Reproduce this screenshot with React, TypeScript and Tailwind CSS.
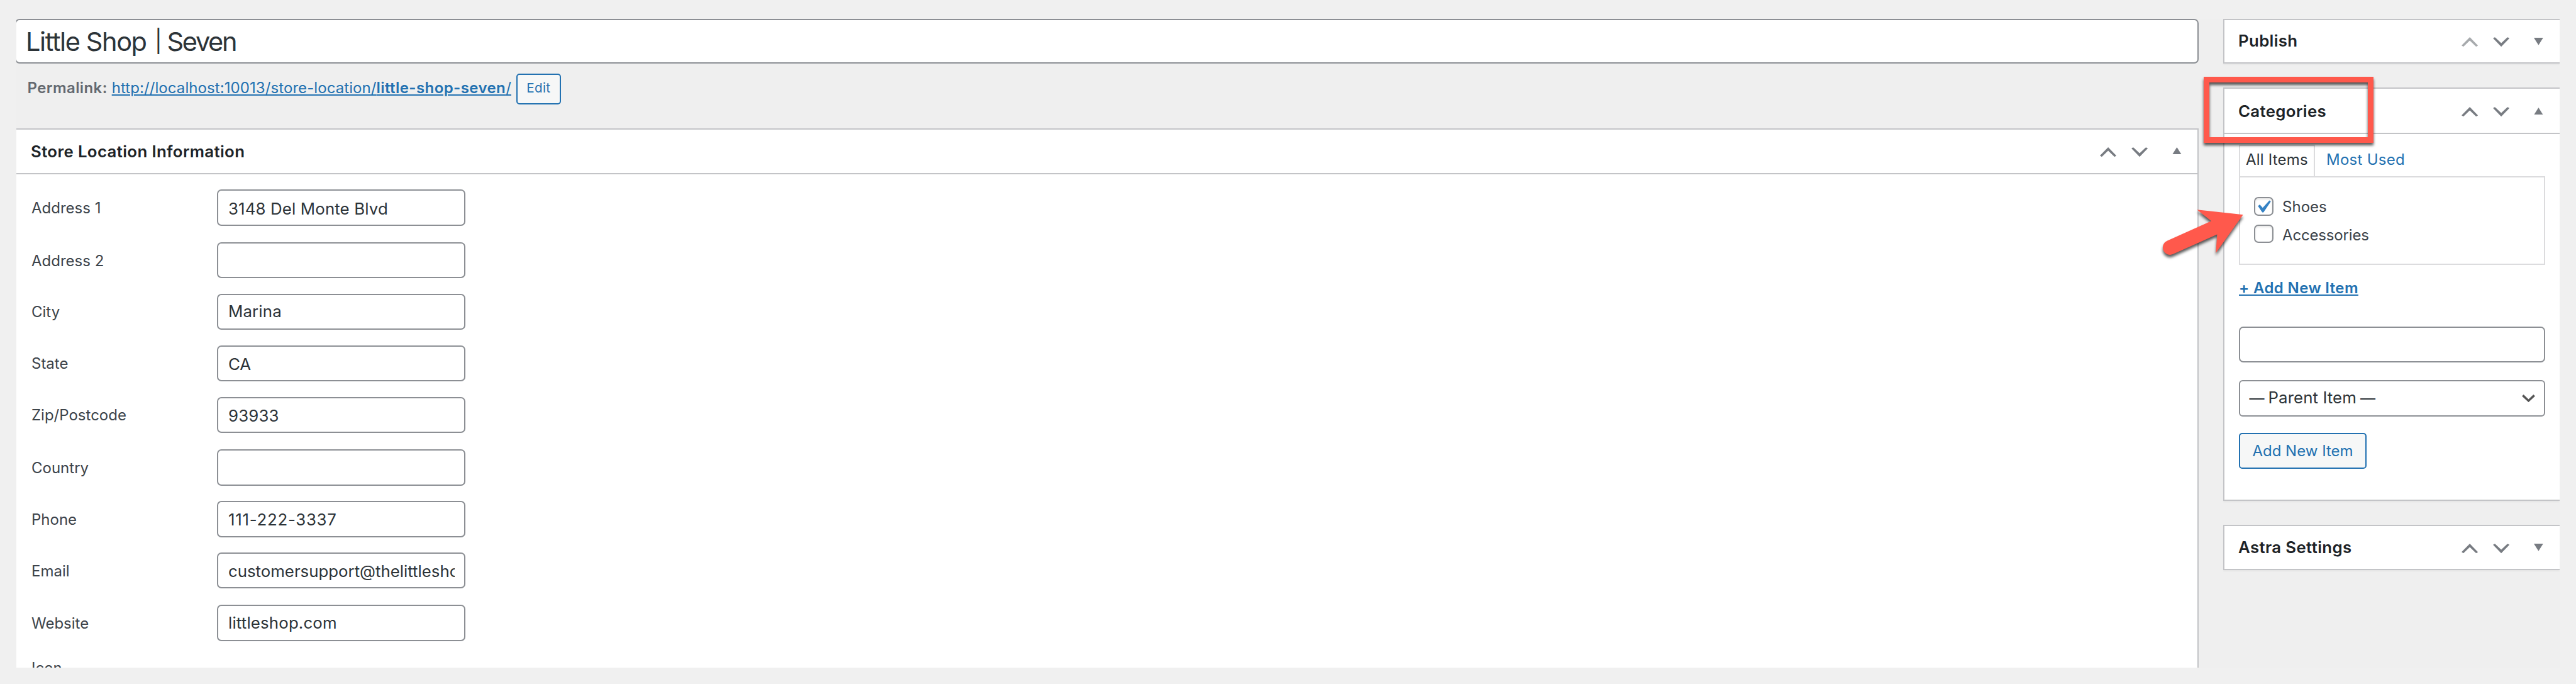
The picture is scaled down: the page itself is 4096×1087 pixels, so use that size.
import type { ReactNode } from "react";

function Chevron({ down = false, muted = false }: { down?: boolean; muted?: boolean }) {
  return (
    <svg
      viewBox="0 0 30 17.4"
      className={`h-[15.2px] w-[26.2px] ${down ? "rotate-180" : ""} ${muted ? "text-[#a7aaad]" : "text-[#787c82]"}`}
    >
      <path d="M15 0L30 15.3L26.6 17.4L15 6.4L3.4 17.4L0 15.3Z" fill="currentColor" />
    </svg>
  );
}

function Triangle({ down = false, className = "" }: { down?: boolean; className?: string }) {
  return (
    <svg viewBox="0 0 17 13.4" className={`h-[11.7px] w-[14.8px] text-[#787c82] ${down ? "rotate-180" : ""} ${className}`}>
      <path d="M8.5 0L17 13.4H0Z" fill="currentColor" />
    </svg>
  );
}

function PanelHeader({
  title,
  open = false,
  first = false,
  raised = false,
  className,
}: {
  title: string;
  open?: boolean;
  first?: boolean;
  raised?: boolean;
  className: string;
}) {
  return (
    <div
      className={`flex items-center justify-between ${open ? "h-[71.4px] border-b-2 border-[#c3c4c7] pt-[1px]" : "h-[67.6px]"} ${className}`}
    >
      <h2 className="text-[25.8px] leading-[34px] font-semibold tracking-[0.36px] text-[#1d2327]">{title}</h2>
      <div className="flex items-center pt-[2px]">
        <Chevron muted={first} />
        <span className="w-[23.5px]" />
        <Chevron down />
        <span className="w-[39.5px]" />
        <Triangle down={!open} className={raised ? "mb-[5px]" : "mb-[2px]"} />
      </div>
    </div>
  );
}

const fields = [
  { label: "Address 1", value: "3148 Del Monte Blvd", gap: "", text: "pt-[3px] tracking-[0.15px]" },
  { label: "Address 2", value: "", gap: "mt-[26.1px]", text: "" },
  { label: "City", value: "Marina", gap: "mt-[24.4px]", text: "tracking-[0.15px]" },
  { label: "State", value: "CA", gap: "mt-[24.4px]", text: "pt-[3px]" },
  { label: "Zip/Postcode", value: "93933", gap: "mt-[24.4px]", text: "pt-[3px] tracking-[0.15px]" },
  { label: "Country", value: "", gap: "mt-[26.1px]", text: "" },
  { label: "Phone", value: "111-222-3337", gap: "mt-[24.4px]", text: "pt-[3px] tracking-[0.75px]" },
  { label: "Email", value: "customersupport@thelittleshop.com", gap: "mt-[24.4px]", text: "pt-[3px]" },
  { label: "Website", value: "littleshop.com", gap: "mt-[26.1px]", text: "tracking-[0.17px]" },
];

function SidePanel({ children, className }: { children: ReactNode; className: string }) {
  return (
    <section className={`border-y-2 border-l-2 border-[#c3c4c7] bg-white shadow-[0_2px_2px_rgba(0,0,0,0.04)] ${className}`}>
      {children}
    </section>
  );
}

function CheckItem({ label, checked = false, text }: { label: string; checked?: boolean; text: string }) {
  return (
    <div className="flex h-[43.6px] items-start">
      <div className="h-[29.6px] w-[31.4px] shrink-0 rounded-[7px] border-2 border-[#8c8f94] bg-white shadow-[inset_0_2px_3px_rgba(0,0,0,0.1)]">
        {checked && (
          <svg viewBox="2 2 32 30" className="h-full w-full">
            <path d="M7 16.7L10.3 13.7L15.8 20L28.3 6L31 8.3L17.3 28.3H15Z" fill="#3582c4" />
          </svg>
        )}
      </div>
      <span className={`ml-[14px] text-[24px] leading-[29.6px] text-[#3c434a] ${text}`}>{label}</span>
    </div>
  );
}

export default function App() {
  return (
    <div className="relative h-[1087px] w-[4096px] overflow-hidden bg-[#f0f0f0] pt-[29.6px] pl-[26px] font-['Inter',sans-serif]">
      <div className="flex h-[1031.2px] w-[4044px] justify-between overflow-hidden bg-[#efefef]">
        <main className="flex w-[3470px] flex-col">
          <div className="-ml-[2px] flex h-[71.4px] shrink-0 items-center rounded-[7px] border-2 border-[#8c8f94] bg-white pt-[3px] pl-[15px] text-[41.5px] leading-none text-[#2c3338]">
            <span className="w-[205px] tracking-[-1.4px] whitespace-nowrap">Little Shop</span>
            <span className="w-[19.5px] pb-[3px] text-[35px] leading-none">|</span>
            <span className="tracking-[-2.3px]">Seven</span>
          </div>

          <div className="mt-[15.7px] flex h-[49px] shrink-0 items-center pl-[17.5px] text-[24px] leading-[30px]">
            <span className="w-[134.2px] shrink-0 pb-[3px] font-semibold tracking-[0.4px] text-[#646970]">Permalink:</span>
            <a className="w-[643px] shrink-0 pb-[3px] tracking-[0.08px] whitespace-nowrap text-[#2271b1] underline decoration-2 underline-offset-[2px]">
              http://localhost:10013/store-location/<span className="font-semibold tracking-[0.42px]">little-shop-seven</span>/
            </a>
            <button className="flex h-[49px] w-[71.4px] items-center justify-center rounded-[5px] border-2 border-[#2271b1] bg-[#f6f7f7] pb-px text-[20.7px] leading-none tracking-[0.3px] text-[#2271b1]">
              Edit
            </button>
          </div>

          <section className="mt-[38.2px] min-h-0 flex-1 overflow-hidden border-t-2 border-r-2 border-[#c3c4c7] bg-white">
            <PanelHeader title="Store Location Information" open raised className="pr-[25px] pl-[23px]" />
            <div className="pt-[24px] pl-[24px]">
              {fields.map((f) => (
                <div key={f.label} className={`flex h-[57.5px] items-center ${f.gap}`}>
                  <label className="w-[295px] pt-[2px] text-[24px] leading-[32px] text-[#3c434a]">{f.label}</label>
                  <div className="flex h-[57.5px] w-[395px] items-center rounded-[7px] border-2 border-[#8c8f94] bg-white pr-[15px] pl-[16px] text-[25.8px] leading-[34px] text-[#2c3338]">
                    <div className={`w-full overflow-hidden whitespace-nowrap ${f.text}`}>{f.value}</div>
                  </div>
                </div>
              ))}
              <div className="mt-[27px] text-[24px] leading-[32px] text-[#3c434a]">Icon</div>
            </div>
          </section>
        </main>

        <aside className="flex w-[535px] flex-col">
          <SidePanel className="h-[71.4px]">
            <PanelHeader title="Publish" first className="pr-[26px] pl-[22px]" />
          </SidePanel>

          <SidePanel className="mt-[38.4px] h-[656.8px]">
            <PanelHeader title="Categories" open className="pr-[26px] pl-[22px]" />
            <div className="flex flex-col items-start pt-[17px] pr-[22.6px] pl-[23px]">
              <div className="flex h-[50.5px] text-[24px] leading-[44px]">
                <span className="w-[120.5px] border-x-2 border-t-2 border-[#dcdcde] pl-[9px] tracking-[0.2px] whitespace-nowrap text-[#2c3338]">
                  All Items
                </span>
                <span className="pt-[2px] pl-[18.5px] tracking-[0.27px] text-[#2271b1]">Most Used</span>
              </div>
              <div className="h-[141px] w-full border-2 border-[#dcdcde] pt-[31px] pl-[21.7px]">
                <CheckItem label="Shoes" checked text="pt-[1px]" />
                <CheckItem label="Accessories" text="pt-[2.5px] tracking-[-0.17px]" />
              </div>
              <a className="mt-[21.5px] text-[24px] leading-[30px] font-semibold tracking-[0.38px] text-[#2271b1] underline decoration-2 underline-offset-[2px]">
                + Add New Item
              </a>
              <div className="mt-[46px] h-[57.5px] w-full rounded-[7px] border-2 border-[#8c8f94] bg-white" />
              <div className="mt-[27.8px] flex h-[57.5px] w-full items-center rounded-[6px] border-2 border-[#8c8f94] bg-white pr-[14px] pl-[14.5px] text-[25.8px] leading-[34px] text-[#2c3338]">
                <span className="w-[30px] text-[24px]">—</span>
                <span className="flex-1">
                  <span className="mr-[6px] tracking-[0.1px]">Parent Item</span>
                  <span className="text-[24px]">—</span>
                </span>
                <svg viewBox="0 0 24 14" className="h-[12.2px] w-[21px]">
                  <path d="M0 3L3 0L12 8.5L21 0L24 3L12 14Z" fill="#555555" />
                </svg>
              </div>
              <button className="mt-[26.2px] flex h-[57.5px] w-[203px] items-center justify-center rounded-[5px] border-2 border-[#2271b1] bg-[#f6f7f7] text-[24px] leading-none text-[#2271b1]">
                Add New Item
              </button>
            </div>
          </SidePanel>

          <SidePanel className="mt-[38.3px] h-[71.4px]">
            <PanelHeader title="Astra Settings" className="pr-[26px] pl-[22px]" />
          </SidePanel>
        </aside>
      </div>

      {/* Callout frame around the Categories heading */}
      <div className="absolute top-[122px] left-[3503.6px] h-[104.5px] w-[270px] border-[9px] border-[#ff594c] drop-shadow-[0_4px_2px_rgba(0,0,0,0.65)]" />

      {/* Callout arrow toward the checked item */}
      <svg
        viewBox="0 0 780 480"
        className="absolute top-[287.5px] left-[3423.5px] h-[139.4px] w-[226.5px] overflow-visible drop-shadow-[0_4px_2px_rgba(0,0,0,0.65)]"
      >
        <path d="M491 183L239 156L317 218L75 326A40 40 0 0 0 108 399L349 291L342 393Z" fill="#ff594c" />
      </svg>
    </div>
  );
}
